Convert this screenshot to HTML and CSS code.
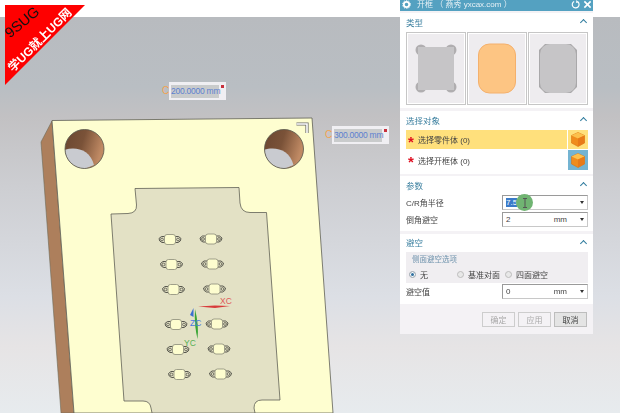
FILE: index.html
```html
<!DOCTYPE html>
<html lang="en">

<head>
    <meta charset="UTF-8">
    <title>开框</title>
    <link rel="stylesheet" href="styles.css">
</head>

<body>
    <div class="topbar"></div>
    <div class="viewport">
        <svg class="model" width="620" height="413" viewBox="0 0 620 413">
            <defs>
                <linearGradient id="holeFill" x1="0" y1="0" x2="1" y2="0.3">
                    <stop offset="0" stop-color="#6a4630"/>
                    <stop offset="0.5" stop-color="#7a5238"/>
                    <stop offset="1" stop-color="#c08a64"/>
                </linearGradient>
                <clipPath id="holeClip">
                    <circle cx="84.5" cy="149" r="19.5"/>
                </clipPath>
                <g id="hole">
                    <circle cx="84.5" cy="149" r="19.5" fill="url(#holeFill)"/>
                    <path d="M64 150 C75 146 90 149 94 165 L70 175 L60 165 Z" fill="#c9cbd0" clip-path="url(#holeClip)"/>
                    <circle cx="84.5" cy="149" r="19.5" fill="none" stroke="#55554a" stroke-width="0.8"/>
                </g>
                <g id="part">
                    <path d="M-5 -3 Q-9 -4 -11 -1 Q-11 2 -8 3 L-5 3 M5 -3 Q9 -4 11 -1 Q11 2 8 3 L5 3" fill="none" stroke="#4a4a42" stroke-width="0.9"/>
                    <circle cx="-8" cy="0" r="1.4" fill="none" stroke="#55554a" stroke-width="0.8"/>
                    <circle cx="8" cy="0" r="1.4" fill="none" stroke="#55554a" stroke-width="0.8"/>
                    <rect x="-5.500" y="-5" width="11" height="10" rx="2.500" fill="#fdfdcf" stroke="#8a8a78" stroke-width="0.8"/>
                </g>
            </defs>

            <polygon points="41,142 52,121 74,413 61,413" fill="#ad7f5c" stroke="#6d6a58" stroke-width="0.6"/>
            <polygon points="52,120.500 312,118 333,413 74,413" fill="#fefed0" stroke="#5f5f55" stroke-width="0.8"/>
            <use href="#hole"/>
            <use href="#hole" x="199.500"/>
            <polyline points="296.500,124 307,124 307,133" fill="none" stroke="#6a6a6a" stroke-width="3.200"/>
            <polyline points="296.500,124 307,124 307,133" fill="none" stroke="#fff" stroke-width="1.600"/>

            <path d="M135 188.500 L239 187.500 L240 203 Q241 212.500 250 212.500 L266.500 212.500 L280 400 L262 400 Q254 400 254 408 L255 413 L152 413 L151 408 Q150 401 143 401 L124 401 L111 214 L128 213.500 Q137 213 136.500 205 Z" fill="#e3e1c5" stroke="#5f5f55" stroke-width="0.8"/>

            <use href="#part" x="170" y="239.500"/>
            <use href="#part" x="211" y="239"/>
            <use href="#part" x="171.500" y="264.500"/>
            <use href="#part" x="212.500" y="264"/>
            <use href="#part" x="173.500" y="289.500"/>
            <use href="#part" x="214.500" y="289"/>
            <use href="#part" x="176" y="324.500"/>
            <use href="#part" x="217" y="324"/>
            <use href="#part" x="178" y="349.500"/>
            <use href="#part" x="219" y="349"/>
            <use href="#part" x="179.500" y="374.500"/>
            <use href="#part" x="220.500" y="374"/>

            <polygon points="198,306.500 215,305.500 230,306 215,308" fill="#d83a3a"/>
            <path d="M195 309 Q199 325 197.500 339 Q194 325 195 309 Z" fill="#3aa535"/>
            <polygon points="193.500,308 190,315 193.500,317" fill="#3b6fd0"/>
            <text class="axis-label" x="220" y="304" fill="#e05a5a">XC</text>
            <text class="axis-label" x="190" y="326" fill="#4a78e0">ZC</text>
            <text class="axis-label" x="184" y="346" fill="#55b055">YC</text>
        </svg>

        <div class="dim dim-width"><span class="dim-c">C</span><span class="dim-value">200.0000 mm</span><i class="dim-mark"></i></div>
        <div class="dim dim-height"><span class="dim-c">C</span><span class="dim-value">300.0000 mm</span><i class="dim-mark"></i></div>

        <div class="ribbon">
            <span class="ribbon-brand">9SUG</span>
            <span class="ribbon-slogan">学UG就上UG网</span>
        </div>

        <div class="panel">
            <div class="panel-title">
                <svg class="gear" width="9" height="9" viewBox="0 0 10 10"><circle cx="5" cy="5" r="3" fill="none" stroke="#fff" stroke-width="2"/><circle cx="5" cy="5" r="4.400" fill="none" stroke="#fff" stroke-width="1" stroke-dasharray="1.400 1.400"/></svg>
                <span class="panel-name">开框 （ 燕秀 yxcax.com ）</span>
                <svg width="9" height="9" viewBox="0 0 10 10"><path d="M7.500 2 A3.800 3.800 0 1 1 3.500 1.600" fill="none" stroke="#fff" stroke-width="1.300"/><path d="M6 0 L8.600 2.400 L5.600 3.400 Z" fill="#fff"/></svg>
                <svg width="9" height="9" viewBox="0 0 10 10"><path d="M1.500 1.500 L8.500 8.500 M8.500 1.500 L1.500 8.500" stroke="#fff" stroke-width="1.800"/></svg>
            </div>

            <section class="group group-type">
                <div class="group-head"><span>类型</span><i class="caret"></i></div>
                <div class="tiles">
                    <div class="tile">
                        <svg width="56" height="69" viewBox="0 0 56 69">
                            <g fill="#b0aeb0"><circle cx="13" cy="16" r="5.500"/><circle cx="43" cy="16" r="5.500"/><circle cx="13" cy="53" r="5.500"/><circle cx="43" cy="53" r="5.500"/></g>
                            <rect x="10" y="13" width="36" height="43" fill="#c6c5c7"/>
                        </svg>
                    </div>
                    <div class="tile">
                        <svg width="56" height="69" viewBox="0 0 56 69">
                            <rect x="9.500" y="10" width="37" height="49" rx="11" fill="#fdc583" stroke="#f4b06c"/>
                        </svg>
                    </div>
                    <div class="tile">
                        <svg width="56" height="69" viewBox="0 0 56 69">
                            <polygon points="15,10 41,10 47,16 47,53 41,59 15,59 9,53 9,16" fill="#a9a8aa"/>
                            <rect x="10" y="10" width="36" height="49" rx="10" fill="#c6c5c7"/>
                        </svg>
                    </div>
                </div>
            </section>

            <section class="group group-select">
                <div class="group-head"><span>选择对象</span><i class="caret"></i></div>
                <div class="pick pick-active">
                    <span class="pick-label"><b class="star">*</b>选择零件体 (0)</span>
                    <span class="pick-icon">
                        <svg width="14" height="15" viewBox="0 0 14 15"><polygon points="7,0.500 13.500,3.500 13.500,11 7,14.500 0.500,11 0.500,3.500" fill="#f08c1c" stroke="#d87410" stroke-width="0.600"/><polygon points="7,0.500 13.500,3.500 7,6.500 0.500,3.500" fill="#fcc04c"/><polygon points="7,6.500 13.500,3.500 13.500,11 7,14.500" fill="#e87a18"/></svg>
                    </span>
                </div>
                <div class="pick">
                    <span class="pick-label"><b class="star">*</b>选择开框体 (0)</span>
                    <span class="pick-icon pick-icon-on">
                        <svg width="14" height="15" viewBox="0 0 14 15"><polygon points="7,0.500 13.500,3.500 13.500,11 7,14.500 0.500,11 0.500,3.500" fill="#f08c1c" stroke="#d87410" stroke-width="0.600"/><polygon points="7,0.500 13.500,3.500 7,6.500 0.500,3.500" fill="#fcc04c"/><polygon points="7,6.500 13.500,3.500 13.500,11 7,14.500" fill="#e87a18"/></svg>
                    </span>
                </div>
            </section>

            <section class="group group-params">
                <div class="group-head"><span>参数</span><i class="caret"></i></div>
                <div class="field">
                    <label>C/R角半径</label>
                    <div class="input"><span class="selected">7.5</span><span class="unit"></span><i class="arrow"></i>
                        <span class="cursor-spot"><svg width="6" height="10" viewBox="0 0 6 10"><path d="M1 0.500 H5 M3 0.500 V9.500 M1 9.500 H5" stroke="#555" fill="none"/></svg></span>
                    </div>
                </div>
                <div class="field">
                    <label>倒角避空</label>
                    <div class="input"><span>2</span><span class="unit">mm</span><i class="arrow"></i></div>
                </div>
            </section>

            <section class="group group-clear">
                <div class="group-head"><span>避空</span><i class="caret"></i></div>
                <div class="options">
                    <div class="options-title">侧面避空选项</div>
                    <div class="radios">
                        <span class="radio radio-on">无</span>
                        <span class="radio">基准对面</span>
                        <span class="radio">四面避空</span>
                    </div>
                </div>
                <div class="field">
                    <label>避空值</label>
                    <div class="input"><span>0</span><span class="unit">mm</span><i class="arrow"></i></div>
                </div>
            </section>

            <div class="actions">
                <button class="btn btn-off">确定</button>
                <button class="btn btn-off">应用</button>
                <button class="btn">取消</button>
            </div>
        </div>
    </div>
</body>

</html>
```

FILE: styles.css
```css
html, body {
    margin: 0;
    padding: 0;
    width: 620px;
    height: 413px;
    overflow: hidden;
    background: #fff;
    font-family: "Liberation Sans", "Noto Sans CJK SC", sans-serif;
}

.topbar {
    height: 17px;
    background: #fff;
}

.viewport {
    position: absolute;
    top: 0;
    left: 0;
    width: 620px;
    height: 413px;
    overflow: hidden;
    filter: blur(0.35px);
}

.viewport::before {
    content: "";
    position: absolute;
    top: 17px;
    left: 0;
    right: 0;
    bottom: 0;
    background: linear-gradient(#b8bbbf 0, #b9bec3 70px, #c2c1c3 100px, #cdced2 170px, #dcdfe5 280px, #e6e4e5 330px, #e7ebee 396px);
}

.model {
    position: absolute;
    top: 0;
    left: 0;
}

.axis-label {
    font-family: "Liberation Sans", sans-serif;
    font-size: 8.5px;
}

/* dimension labels on the model */
.dim {
    position: absolute;
    display: flex;
    align-items: center;
    width: 57px;
    height: 18px;
    background: #f0eff3;
    box-sizing: border-box;
    padding-left: 2px;
}

.dim-width {
    top: 82px;
    left: 169px;
}

.dim-height {
    top: 126px;
    left: 332px;
}

.dim-value {
    width: 48px;
    height: 13px;
    line-height: 13px;
    background: #c9cbcc;
    color: #5b7fd0;
    font-size: 8.5px;
    letter-spacing: -0.25px;
    white-space: nowrap;
}

.dim-c {
    position: absolute;
    left: -7px;
    top: 2px;
    color: #f2a450;
    font-size: 10px;
    line-height: 13px;
}

.dim-mark {
    position: absolute;
    top: 3px;
    right: 2px;
    width: 3px;
    height: 3px;
    background: #c8303c;
}

/* corner banner */
.ribbon {
    position: absolute;
    top: 5px;
    left: 5px;
    width: 80px;
    height: 80px;
    background: #fe0000;
    clip-path: polygon(0 0, 100% 0, 0 100%);
}

.ribbon span {
    position: absolute;
    width: 90px;
    text-align: center;
    white-space: nowrap;
}

.ribbon-brand {
    top: 8px;
    left: -28px;
    font-size: 14.5px;
    line-height: 18px;
    color: #111;
    transform: rotate(-40deg);
}

.ribbon-slogan {
    top: 27px;
    left: -10px;
    font-size: 12px;
    line-height: 16px;
    font-weight: bold;
    color: #fff;
    transform: rotate(-45deg);
}

/* dialog */
.panel {
    position: absolute;
    top: 0;
    left: 400px;
    width: 193px;
    height: 334px;
    background: #f4f2f5;
    font-size: 8px;
    color: #444;
}

.panel-title {
    display: flex;
    align-items: center;
    gap: 3px;
    height: 11px;
    padding: 0 1px 2px 2px;
    box-sizing: border-box;
    background: #54a1c1;
    color: #e6f0f5;
}

.panel-name {
    flex: 1;
    padding-left: 3px;
    font-size: 8px;
    line-height: 9px;
    white-space: nowrap;
}

.group {
    background: #fff;
    padding: 0 5px 4px 6px;
}

.group-type {
    margin-top: 2px;
    padding-bottom: 3px;
}

.group-select {
    margin-top: 3px;
}

.group-params {
    margin-top: 2px;
}

.group-clear {
    margin-top: 3px;
    padding-bottom: 5px;
}

.group-head {
    display: flex;
    align-items: center;
    justify-content: space-between;
    box-sizing: border-box;
    height: 19px;
    padding-bottom: 2px;
    font-size: 8.5px;
    color: #3a7f9f;
}

.group-clear .group-head {
    height: 18px;
}

.caret {
    width: 4px;
    height: 4px;
    margin: 2px 2px 0 0;
    border-top: 1.5px solid #2f7c9e;
    border-left: 1.5px solid #2f7c9e;
    transform: rotate(45deg);
}

.tiles {
    display: flex;
    gap: 1px;
}

.tile {
    display: flex;
    flex: 1;
    height: 73px;
    box-sizing: border-box;
    border: 1px solid #c6c6c6;
    padding: 1px;
}

.tile svg {
    background: #eeecef;
    width: 100%;
    height: 100%;
}

.pick {
    display: flex;
    gap: 1px;
    height: 20px;
    margin-top: 1px;
}

.pick-active {
    height: 19px;
    margin-top: 0;
}

.pick-label {
    display: flex;
    align-items: center;
    flex: 1;
}

.pick-active .pick-label,
.pick-active .pick-icon {
    background: #ffe07c;
}

.star {
    width: 10px;
    margin-right: 2px;
    text-align: center;
    font-size: 15px;
    line-height: 12px;
    height: 8px;
    color: #e01020;
}

.pick-icon {
    display: flex;
    align-items: center;
    justify-content: center;
    width: 20px;
}

.pick-icon-on {
    background: #74b4d2;
}

.field {
    display: flex;
    align-items: center;
    justify-content: space-between;
    height: 15px;
}

.field + .field {
    margin-top: 2px;
}

.input {
    position: relative;
    display: flex;
    align-items: center;
    width: 86px;
    height: 15px;
    box-sizing: border-box;
    padding: 0 3px;
    background: #fff;
    border: 1px solid #c8c8c8;
    border-top-color: #9a9a9a;
    border-left-color: #9a9a9a;
}

.input .unit {
    flex: 1;
    padding-right: 13px;
    text-align: right;
}

.selected {
    background: #3a7ac8;
    color: #fff;
}

.arrow {
    width: 0;
    height: 0;
    border-top: 3px solid #333;
    border-left: 2.5px solid transparent;
    border-right: 2.5px solid transparent;
}

.cursor-spot {
    position: absolute;
    top: -2px;
    left: 13px;
    display: flex;
    align-items: center;
    justify-content: center;
    width: 17px;
    height: 17px;
    border-radius: 50%;
    background: #70b472;
}

.options {
    height: 31px;
    box-sizing: border-box;
    margin-bottom: 1px;
    padding: 3px 3px 0;
    background: #f0eef1;
}

.options-title {
    padding-left: 3px;
    font-size: 7.5px;
    color: #6f93ad;
    line-height: 10px;
}

.radios {
    display: flex;
    margin-top: 4px;
}

.radio {
    position: relative;
    box-sizing: border-box;
    width: 48px;
    padding-left: 11px;
    white-space: nowrap;
}

.radio::before {
    content: "";
    position: absolute;
    top: 2px;
    left: 0;
    width: 5px;
    height: 5px;
    border: 1px solid #bbb;
    border-radius: 50%;
    background: #e8e8e8;
}

.radio-on::before {
    background: #2f6f9f;
    box-shadow: inset 0 0 0 1px #fff;
}

.actions {
    display: flex;
    justify-content: flex-end;
    gap: 3px;
    padding: 8px 6px 0 0;
}

.btn {
    width: 33px;
    height: 15px;
    padding: 0;
    font: inherit;
    color: #444;
    background: #e4e4e4;
    border: 1px solid #bdbdbd;
}

.btn-off {
    color: #a9a9a9;
    background: #f4f2f5;
    border-color: #cdcdcd;
}
```
